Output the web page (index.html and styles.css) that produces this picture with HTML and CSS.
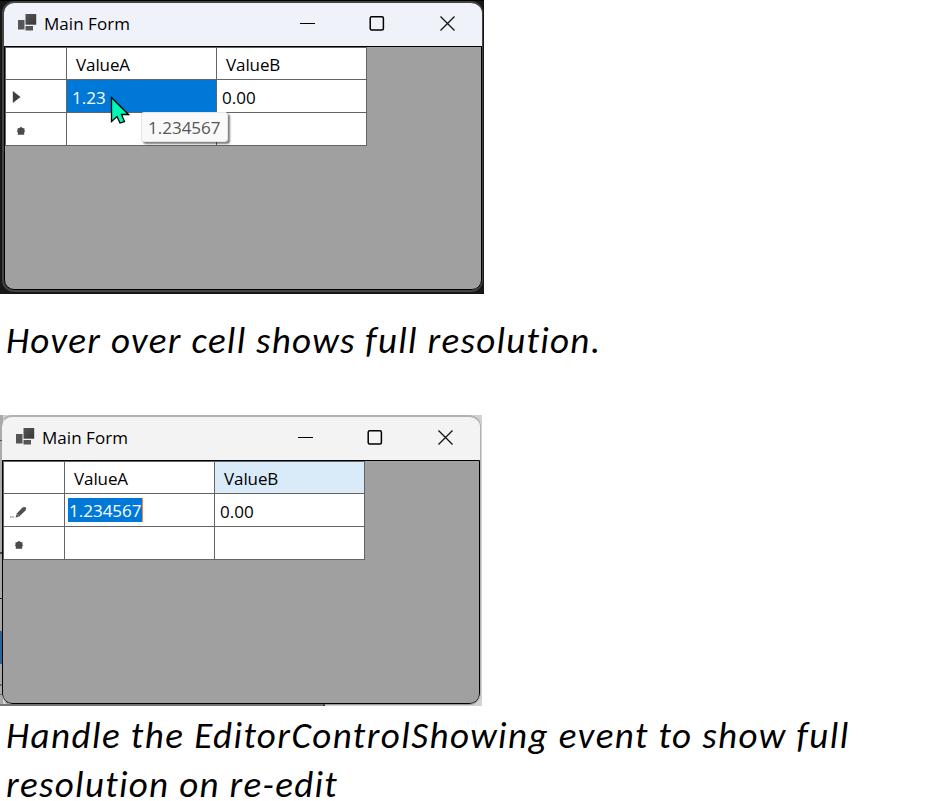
FILE: index.html
```html
<!DOCTYPE html>
<html lang="en">
<head>
<meta charset="utf-8">
<title>Main Form</title>
<link rel="stylesheet" href="styles.css">
</head>
<body>
<svg width="0" height="0" class="defs">
  <defs>
    <linearGradient id="shade" x1="0" y1="0" x2="1" y2="1"><stop offset="0" stop-color="#555"/><stop offset="1" stop-color="#383838"/></linearGradient>
    <symbol id="app" viewBox="0 0 20 18"><rect x="0" y="6" width="6.500" height="9.500" fill="#555"/><rect x="7.500" y="0" width="10.700" height="10.700" fill="url(#shade)"/><rect x="7.500" y="12" width="7.500" height="4.500" fill="#555"/></symbol>
    <symbol id="min" viewBox="0 0 16 16"><path d="M1 8.500h15" stroke="#000"/></symbol>
    <symbol id="max" viewBox="0 0 16 16"><rect x="1.200" y="1.700" width="13.200" height="13.200" rx="1.500" fill="none" stroke="#000" stroke-width="1.500"/></symbol>
    <symbol id="close" viewBox="0 0 16 16"><path d="M1.500 1.500l14 14M15.500 1.500L1.500 15.500" stroke="#111" stroke-width="1.300" fill="none"/></symbol>
    <symbol id="star" viewBox="0 0 10 10"><path d="M5 .8L6.500 2 8.600 2.400 8.400 4.500 9.200 5.200 8.200 6.200V8.700H1.800V6.200L.8 5.200 1.600 4.500 1.400 2.400 3.500 2z" fill="#4a4a4a"/></symbol>
  </defs>
</svg>
<main>
  <section class="shot dark">
    <div class="window">
      <header class="titlebar">
        <svg class="app"><use href="#app"/></svg><span class="title">Main Form</span>
        <div class="controls"><svg><use href="#min"/></svg><svg><use href="#max"/></svg><svg><use href="#close"/></svg></div>
      </header>
      <div class="client">
        <div class="table">
          <div class="cell"></div><div class="cell head">ValueA</div><div class="cell head">ValueB</div>
          <div class="cell mark"><svg class="arrow" viewBox="0 0 9 14"><path d="M.8 1v12L8.500 7z" fill="#3f3f3f"/></svg></div><div class="cell selected">1.23</div><div class="cell">0.00</div>
          <div class="cell mark"><svg class="star"><use href="#star"/></svg></div><div class="cell"></div><div class="cell"></div>
        </div>
      </div>
    </div>
    <div class="tooltip">1.234567</div>
    <svg class="cursor" viewBox="0 0 20 29"><path d="M1.500 1.500V25.500L7 20.500L10 27L14.500 25.500L11.500 18.500H18.500Z" fill="#00f6b2" stroke="#000" stroke-width="1.300"/></svg>
  </section>
  <p class="caption hover"><span>Hover over cell shows full resolution.</span></p>
  <section class="shot light">
    <div class="window">
      <header class="titlebar">
        <svg class="app"><use href="#app"/></svg><span class="title">Main Form</span>
        <div class="controls"><svg><use href="#min"/></svg><svg><use href="#max"/></svg><svg><use href="#close"/></svg></div>
      </header>
      <div class="client">
        <div class="table">
          <div class="cell"></div><div class="cell head">ValueA</div><div class="cell head hot">ValueB</div>
          <div class="cell mark"><svg class="pencil" viewBox="0 0 17 13"><path d="M5.500 11.700L7 7.200L12.500 1.500Q14.500.5 16 1.500Q16.500 3.500 15 5L9.500 10.300Z" fill="#505050"/><path d="M6.900 7.800L9.300 10" stroke="#999" stroke-width=".8"/><path d="M0 11h4" stroke="#aaa" stroke-width="2" stroke-dasharray="1.500 .7"/></svg></div><div class="cell editing"><span class="edit">1.234567</span></div><div class="cell">0.00</div>
          <div class="cell mark"><svg class="star"><use href="#star"/></svg></div><div class="cell"></div><div class="cell"></div>
        </div>
      </div>
    </div>
  </section>
  <p class="caption event"><span class="first">Handle the EditorControlShowing event to show full</span> <span class="second">resolution on re-edit</span></p>
</main>
</body>
</html>
```
FILE: styles.css
```css
* { box-sizing: border-box; }
html, body { margin: 0; background: #fff; overflow: hidden; }
body { width: 929px; height: 801px; font-family: "Open Sans", "Noto Sans", sans-serif; font-size: 17px; color: #000; }
.defs { position: absolute; }
main { display: flex; flex-direction: column; }
.shot { position: relative; }
.dark { width: 484px; height: 294px; padding: 1px 1px 2px 2px; background: linear-gradient(#000 0 1px, #171717 1px); }
.light {
  width: 482px; height: 291px; padding: 0 1px 1px 0;
  background:
    linear-gradient(#2a5a91, #2a5a91) 25px 0 / 2px 2px no-repeat,
    linear-gradient(#747474, #747474) 0 289px / 323px 2px no-repeat,
    linear-gradient(#333, #333) 322px 289px / 3px 2px no-repeat,
    linear-gradient(#aaa 0 25px, #285a93 25px 26px, #aaa 26px 137px, #444 137px 139px, #a7a7a7 139px 183px, #222 183px 184px, #a7a7a7 184px 216px, #29659d 216px 249px, #a7a7a7 249px 269px, #537091 269px 271px, #aaa 271px 279px, #666 279px 280px, #aaa 280px) 0 0 / 3px 100% no-repeat,
    #d2d2d2;
}
.window { height: 100%; display: flex; flex-direction: column; overflow: hidden; border-radius: 12px; }
.dark .window { border: 2px solid #444; border-right-width: 1px; }
.light .window { border-top: 2px solid #b1b1b1; border-right: 1px solid #b1b1b1; border-bottom: 1px solid rgba(110,110,110,.55); border-left: 2px solid transparent; background-clip: padding-box; }
.titlebar { flex: none; height: 43px; padding: 0 27px 3px 14px; display: flex; align-items: center; background: #f0f2f9; }
.light .titlebar { background: #f3f3f3; }
.app { width: 20px; height: 18px; margin-right: 6px; }
.title { letter-spacing: .05px; }
.controls { margin-left: auto; display: flex; gap: 54px; }
.controls svg { width: 16px; height: 16px; }
.client { flex: 1; border: 1px solid #000; border-radius: 0 0 10px 10px; background: #a0a0a0; overflow: hidden; }
.table { width: 362px; display: grid; grid-template-columns: 61px 150px 150px; grid-template-rows: 32px 33px 33px; border: solid #646464; border-width: 1px 0 0 1px; }
.cell { display: flex; align-items: center; padding-left: 5px; border: solid #646464; border-width: 0 1px 1px 0; background: #fff; line-height: 24px; padding-top: 3px; }
.head { padding-left: 9px; padding-top: 2px; letter-spacing: -.1px; }
.hot { background: #d9ebf9; }
.selected { background: #0078d7; color: #fff; }
.mark { padding-top: 2px; }
.arrow { width: 9px; height: 14px; margin-left: 1px; }
.star { width: 10px; height: 10px; margin-left: 4.500px; margin-top: 2px; }
.pencil { width: 17px; height: 13px; margin-left: 1px; margin-top: 2px; }
.editing { padding-left: 3px; padding-top: 1px; }
.edit { height: 24px; margin-top: -1px; padding-left: 1px; line-height: 26px; background: #0078d7; color: #fff; border-right: 1px solid #ff852d; }
.tooltip { position: absolute; left: 141px; top: 112px; width: 87px; height: 30px; padding-left: 6px; line-height: 29px; background: #f9f9f9; color: #575757; border: 1px solid #e5e5e5; border-radius: 3px; box-shadow: 2px 2px 2px rgba(0,0,0,.5); }
.cursor { position: absolute; left: 110px; top: 96px; width: 20px; height: 29px; }
.caption { margin: 0; font-family: Carlito, Lato, sans-serif; font-style: italic; font-size: 37px; line-height: 49px; white-space: nowrap; }
.hover { height: 121px; padding: 22px 0 0 6px; letter-spacing: 1.3px; }
.event { padding: 5px 0 0 6px; letter-spacing: 1.46px; }
.first, .second { display: block; }
.first { margin-bottom: 9px; }
.second { line-height: 31px; letter-spacing: 1.33px; }
```
